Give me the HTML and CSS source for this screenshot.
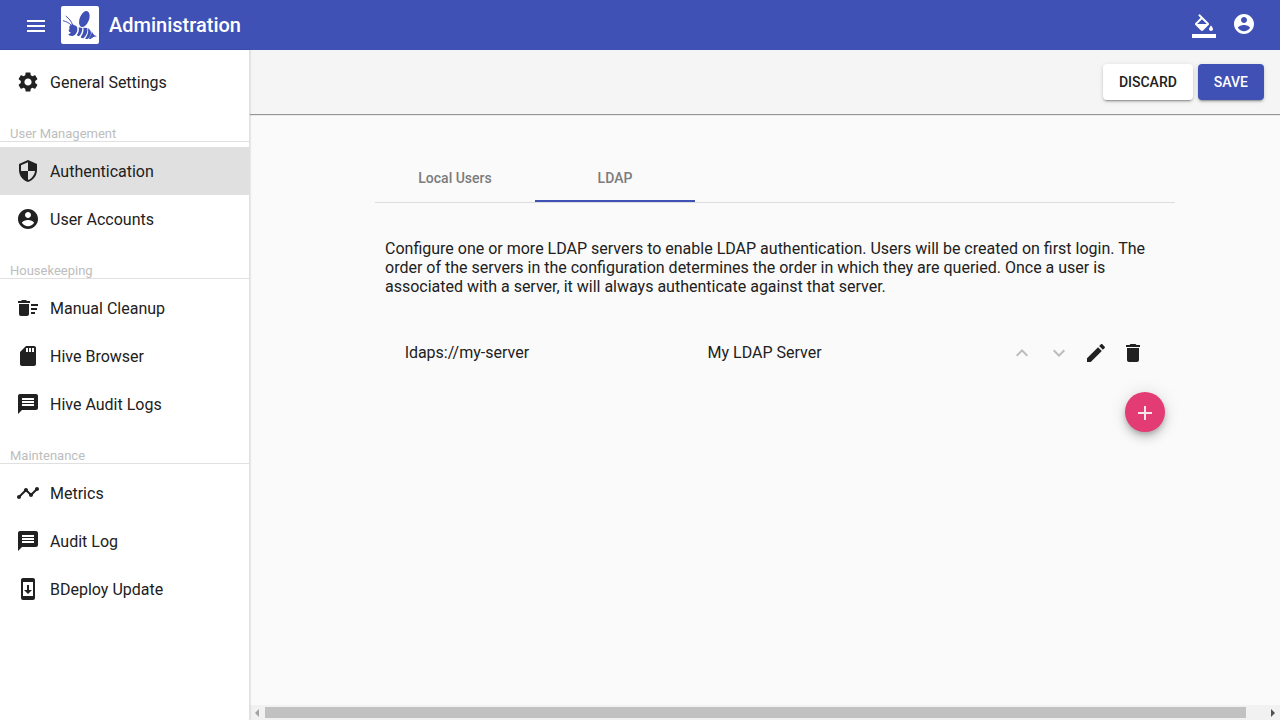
FILE: index.html
```html
<!DOCTYPE html>
<html lang="en">
<head>
<meta charset="utf-8">
<meta name="viewport" content="width=device-width, initial-scale=1">
<title>Administration</title>
<link rel="stylesheet" href="styles.css">
</head>
<body>
<svg class="sprite" aria-hidden="true">
  <symbol id="account" viewBox="0 0 24 24"><path d="M12 2C6.480 2 2 6.480 2 12s4.480 10 10 10 10-4.480 10-10S17.520 2 12 2zm0 3c1.660 0 3 1.340 3 3s-1.340 3-3 3-3-1.340-3-3 1.340-3 3-3zm0 14.200c-2.500 0-4.710-1.280-6-3.220.03-1.990 4-3.080 6-3.080 1.990 0 5.970 1.090 6 3.080-1.290 1.940-3.500 3.220-6 3.220z"/></symbol>
  <symbol id="message" viewBox="0 0 24 24"><path d="M20 2H4c-1.100 0-1.990.9-1.990 2L2 22l4-4h14c1.100 0 2-.9 2-2V4c0-1.100-.9-2-2-2zm-2 12H6v-2h12v2zm0-3H6V9h12v2zm0-3H6V6h12v2z"/></symbol>
</svg>
<header class="topbar">
  <button class="icon-button" type="button" aria-label="Menu"><svg class="icon" viewBox="0 0 24 24"><path d="M3 18h18v-2H3v2zm0-5h18v-2H3v2zm0-7v2h18V6H3z"/></svg></button>
  <svg class="logo" viewBox="0 0 114 114" aria-hidden="true">
    <ellipse cx="70" cy="39" rx="14" ry="25" transform="rotate(22 70 39)"/>
    <path d="M29 57c5-3 9-1 11 1 7 1 10 7 9 14-1 10-8 18-17 18-5 0-9-2-10-5 4-1 6-3 7-6-4 0-6-3-6-6 2-2 3-4 2-8 0-4 1-6 4-8z"/>
    <path class="antenna" d="M31 58C25 51 17 47 6 44M35 57C31 46 24 37 14 30"/>
    <path d="M53 64l11 2c0 9-3 18-10 25-4-1-6-3-6-5 5-6 7-14 5-22z"/>
    <path d="M67 65l12 1c2 11-2 22-12 31-4 0-7-2-8-4 7-9 10-18 8-28z"/>
    <path d="M81 67c6 3 10 9 9 16-1 6-5 12-10 16l-8-1c8-9 11-19 9-31z"/>
    <path d="M92 76c3 5 5 9 8 12l8 3-11 2-8 6-6-1c6-7 9-14 9-22z"/>
  </svg>
  <h1 class="title">Administration</h1>
  <div class="top-actions">
    <button class="icon-button" type="button" aria-label="Theme"><svg class="icon" viewBox="0 0 24 24"><path d="M16.560 8.940L7.620 0 6.210 1.410l2.380 2.380-5.150 5.150c-.59.59-.59 1.540 0 2.120l5.500 5.500c.29.29.68.44 1.060.44s.77-.15 1.060-.44l5.500-5.500c.59-.58.59-1.530 0-2.120zM5.210 10L10 5.210 14.790 10H5.210zM19 11.500s-2 2.170-2 3.500c0 1.100.9 2 2 2s2-.9 2-2c0-1.330-2-3.500-2-3.500zM0 20h24v4H0z"/></svg></button>
    <button class="icon-button account-button" type="button" aria-label="Account"><svg class="icon"><use href="#account"/></svg></button>
  </div>
</header>
<div class="layout">
  <nav class="sidebar" aria-label="Administration">
    <a class="nav-item" href="#general"><svg class="icon" viewBox="0 0 24 24"><path d="M19.140 12.940c.04-.3.06-.61.06-.94 0-.32-.02-.64-.07-.94l2.030-1.580c.18-.14.23-.41.12-.61l-1.920-3.320c-.12-.22-.37-.29-.59-.22l-2.390.96c-.5-.38-1.030-.7-1.620-.94l-.36-2.540c-.04-.24-.24-.41-.48-.41h-3.840c-.24 0-.43.17-.47.41l-.36 2.540c-.59.24-1.130.57-1.620.94l-2.390-.96c-.22-.08-.47 0-.59.22L2.740 8.870c-.12.21-.08.47.12.61l2.030 1.580c-.05.3-.09.63-.09.94s.02.64.07.94l-2.030 1.580c-.18.14-.23.41-.12.61l1.920 3.320c.12.22.37.29.59.22l2.390-.96c.5.38 1.030.7 1.620.94l.36 2.540c.05.24.24.41.48.41h3.840c.24 0 .44-.17.47-.41l.36-2.540c.59-.24 1.130-.56 1.620-.94l2.390.96c.22.08.47 0 .59-.22l1.920-3.320c.12-.22.07-.47-.12-.61l-2.010-1.580zM12 15.600c-1.980 0-3.600-1.620-3.600-3.600s1.620-3.600 3.600-3.600 3.600 1.620 3.600 3.600-1.620 3.600-3.600 3.600z"/></svg>General Settings</a>
    <h2 class="nav-heading">User Management</h2>
    <a class="nav-item active" href="#authentication" aria-current="page"><svg class="icon" viewBox="0 0 24 24"><path d="M12 1L3 5v6c0 5.550 3.840 10.740 9 12 5.160-1.260 9-6.450 9-12V5l-9-4zm0 10.990h7c-.53 4.120-3.280 7.790-7 8.940V12H5V6.300l7-3.110v8.800z"/></svg>Authentication</a>
    <a class="nav-item" href="#accounts"><svg class="icon"><use href="#account"/></svg>User Accounts</a>
    <h2 class="nav-heading">Housekeeping</h2>
    <a class="nav-item" href="#cleanup"><svg class="icon" viewBox="0 0 24 24"><path d="M15 16h4v2h-4zm0-8h7v2h-7zm0 4h6v2h-6zM3 18c0 1.100.9 2 2 2h6c1.100 0 2-.9 2-2V8H3v10zM14 5h-3l-1-1H6L5 5H2v2h12z"/></svg>Manual Cleanup</a>
    <a class="nav-item" href="#hive"><svg class="icon" viewBox="0 0 24 24"><path d="M18 2h-8L4.020 8 4 20c0 1.100.9 2 2 2h12c1.100 0 2-.9 2-2V4c0-1.100-.9-2-2-2zm-6 6h-2V4h2v4zm3 0h-2V4h2v4zm3 0h-2V4h2v4z"/></svg>Hive Browser</a>
    <a class="nav-item" href="#hive-audit"><svg class="icon"><use href="#message"/></svg>Hive Audit Logs</a>
    <h2 class="nav-heading">Maintenance</h2>
    <a class="nav-item" href="#metrics"><svg class="icon" viewBox="0 0 24 24"><path d="M23 8c0 1.100-.9 2-2 2-.18 0-.35-.02-.51-.07l-3.560 3.550c.05.16.07.34.07.52 0 1.100-.9 2-2 2s-2-.9-2-2c0-.18.02-.36.07-.52l-2.550-2.550c-.16.05-.34.07-.52.07s-.36-.02-.52-.07l-4.550 4.560c.05.16.07.33.07.51 0 1.100-.9 2-2 2s-2-.9-2-2 .9-2 2-2c.18 0 .35.02.51.07l4.560-4.550C8.020 9.360 8 9.180 8 9c0-1.100.9-2 2-2s2 .9 2 2c0 .18-.02.36-.07.52l2.550 2.550c.16-.05.34-.07.52-.07s.36.02.52.07l3.550-3.560C19.020 8.350 19 8.180 19 8c0-1.100.9-2 2-2s2 .9 2 2z"/></svg>Metrics</a>
    <a class="nav-item" href="#audit"><svg class="icon"><use href="#message"/></svg>Audit Log</a>
    <a class="nav-item" href="#update"><svg class="icon" viewBox="0 0 24 24"><path d="M17 1.010L7 1c-1.100 0-2 .9-2 2v18c0 1.100.9 2 2 2h10c1.100 0 2-.9 2-2V3c0-1.100-.9-1.990-2-1.990zM17 19H7V5h10v14zm-1-6h-3V8h-2v5H8l4 4 4-4z"/></svg>BDeploy Update</a>
  </nav>
  <main class="main">
    <div class="toolbar">
      <button class="button" type="button">DISCARD</button>
      <button class="button primary" type="button">SAVE</button>
    </div>
    <div class="viewport">
      <div class="canvas">
      <section class="content">
        <div class="tabs" role="tablist">
          <button class="tab" type="button" role="tab" aria-selected="false">Local Users</button>
          <button class="tab selected" type="button" role="tab" aria-selected="true">LDAP</button>
        </div>
        <div class="panel">
          <p class="intro">Configure one or more LDAP servers to enable LDAP authentication. Users will be created on first login. The order of the servers in the configuration determines the order in which they are queried. Once a user is associated with a server, it will always authenticate against that server.</p>
          <div class="server">
            <span>ldaps://my-server</span>
            <span>My LDAP Server</span>
            <div class="server-actions">
              <button class="icon-button" type="button" disabled aria-label="Move up"><svg class="icon" viewBox="0 0 24 24"><path d="M12 8l-6 6 1.410 1.410L12 10.830l4.590 4.580L18 14z"/></svg></button>
              <button class="icon-button" type="button" disabled aria-label="Move down"><svg class="icon" viewBox="0 0 24 24"><path d="M16.590 8.590L12 13.170 7.410 8.590 6 10l6 6 6-6z"/></svg></button>
              <button class="icon-button" type="button" aria-label="Edit"><svg class="icon" viewBox="0 0 24 24"><path d="M3 17.250V21h3.750L17.810 9.940l-3.750-3.750L3 17.250zM20.710 7.040c.39-.39.39-1.020 0-1.410l-2.340-2.340c-.39-.39-1.020-.39-1.410 0l-1.830 1.830 3.750 3.750 1.830-1.830z"/></svg></button>
              <button class="icon-button" type="button" aria-label="Delete"><svg class="icon" viewBox="0 0 24 24"><path d="M6 19c0 1.100.9 2 2 2h8c1.100 0 2-.9 2-2V7H6v12zM19 4h-3.500l-1-1h-5l-1 1H5v2h14V4z"/></svg></button>
            </div>
          </div>
          <button class="fab" type="button" aria-label="Add server"><svg class="icon" viewBox="0 0 24 24"><path d="M19 13h-6v6h-2v-6H5v-2h6V5h2v6h6v2z"/></svg></button>
        </div>
      </section>
      </div>
    </div>
    <div class="scrollbar" aria-hidden="true">
      <svg class="arrow left" viewBox="0 0 15 15"><path d="M9 4v8L5 8z"/></svg>
      <div class="thumb"></div>
      <svg class="arrow right" viewBox="0 0 15 15"><path d="M6 4v8l4-4z"/></svg>
    </div>
  </main>
</div>
</body>
</html>
```
FILE: styles.css
```css
* { box-sizing: border-box; }
body {
  margin: 0;
  height: 100vh;
  display: flex;
  flex-direction: column;
  background: #fafafa;
  color: #212121;
  font: 16px/19px Roboto, "Liberation Sans", sans-serif;
}
button { font: inherit; color: inherit; border: 0; padding: 0; background: none; cursor: pointer; }
.sprite { display: none; }
.icon { display: block; width: 24px; height: 24px; flex: none; fill: currentColor; }
.icon-button { display: block; flex: none; }
.icon-button:disabled { color: #bcbcbc; cursor: default; }

.topbar {
  display: flex;
  align-items: center;
  height: 50px;
  flex: none;
  padding: 0 24px;
  background: #3f51b5;
  color: #fff;
}
.topbar > .icon-button { padding-top: 2px; }
.logo { width: 38px; height: 38px; margin: 0 10px 0 13px; border-radius: 2px; background: #fff; fill: #3f51b5; }
.antenna { fill: none; stroke: #3f51b5; stroke-width: 3; }
.title { margin: 0; font-size: 20px; line-height: 32px; font-weight: 500; }
.top-actions { display: flex; align-items: center; gap: 16px; margin-left: auto; }
.top-actions .icon-button { padding-top: 2px; }
.top-actions .account-button { padding: 0 0 2px; }

.layout { display: flex; flex: 1; min-height: 0; }
.sidebar {
  width: 250px;
  flex: none;
  padding-top: 8px;
  background: #fff;
  border-right: 1px solid #e0e0e0;
  box-shadow: 0 0 2px rgba(0, 0, 0, .2);
  z-index: 1;
}
.nav-item {
  display: flex;
  align-items: center;
  gap: 10px;
  height: 48px;
  padding: 0 16px;
  color: inherit;
  text-decoration: none;
}
.nav-item.active { background: #e0e0e0; }
.nav-heading {
  margin: 0 0 5px;
  padding: 20px 10px 0;
  border-bottom: 1px solid #e0e0e0;
  color: #bdbdbd;
  font-size: 13px;
  line-height: 15px;
  font-weight: 400;
}

.main { display: flex; flex-direction: column; flex: 1; min-width: 0; }
.toolbar {
  display: flex;
  align-items: center;
  justify-content: flex-end;
  gap: 5px;
  height: 64px;
  flex: none;
  padding: 0 16px;
  background: #f5f5f5;
  box-shadow: 0 1px 1px rgba(0, 0, 0, .4);
}
.button {
  height: 36px;
  padding: 0 16px;
  border-radius: 4px;
  background: #fff;
  font-size: 14px;
  font-weight: 500;
  box-shadow: 0 3px 1px -2px rgba(0, 0, 0, .2), 0 2px 2px rgba(0, 0, 0, .14), 0 1px 5px rgba(0, 0, 0, .12);
}
.button.primary { background: #3f51b5; color: #fff; }

.viewport { flex: 1; min-height: 0; overflow: hidden; }
.canvas { width: calc(100% + 20px); padding: 40px 20px 0; }
.content { max-width: 800px; margin: 0 auto; }
.tabs { display: flex; border-bottom: 1px solid #dcdcdc; }
.tab {
  width: 160px;
  height: 48px;
  border-top: 2px solid transparent;
  border-bottom: 2px solid transparent;
  color: #7c7c7c;
  font-size: 14px;
  font-weight: 500;
}
.tab.selected { border-bottom-color: #3f51b5; }
.panel { padding: 36px 10px 20px; }
.intro { margin: 0; }
.server {
  display: grid;
  grid-template-columns: 1fr 1fr 135px;
  align-items: center;
  padding: 44px 20px 0;
}
.server-actions { display: flex; justify-content: space-between; padding-top: 1px; }
.fab {
  display: flex;
  align-items: center;
  justify-content: center;
  width: 40px;
  height: 40px;
  margin: 27px 0 0 auto;
  padding-top: 2px;
  border-radius: 50%;
  background: #e33b73;
  color: #f3e9ec;
  box-shadow: 0 3px 5px -1px rgba(0, 0, 0, .2), 0 6px 10px rgba(0, 0, 0, .14), 0 1px 18px rgba(0, 0, 0, .12);
}
.scrollbar { display: flex; align-items: center; height: 15px; flex: none; background: #f1f1f1; }
.thumb { flex: 1; height: 11px; margin-right: 19px; background: #c1c1c1; }
.arrow { width: 15px; height: 15px; flex: none; }
.arrow.left { fill: #a3a3a3; }
.arrow.right { fill: #505050; }
```
